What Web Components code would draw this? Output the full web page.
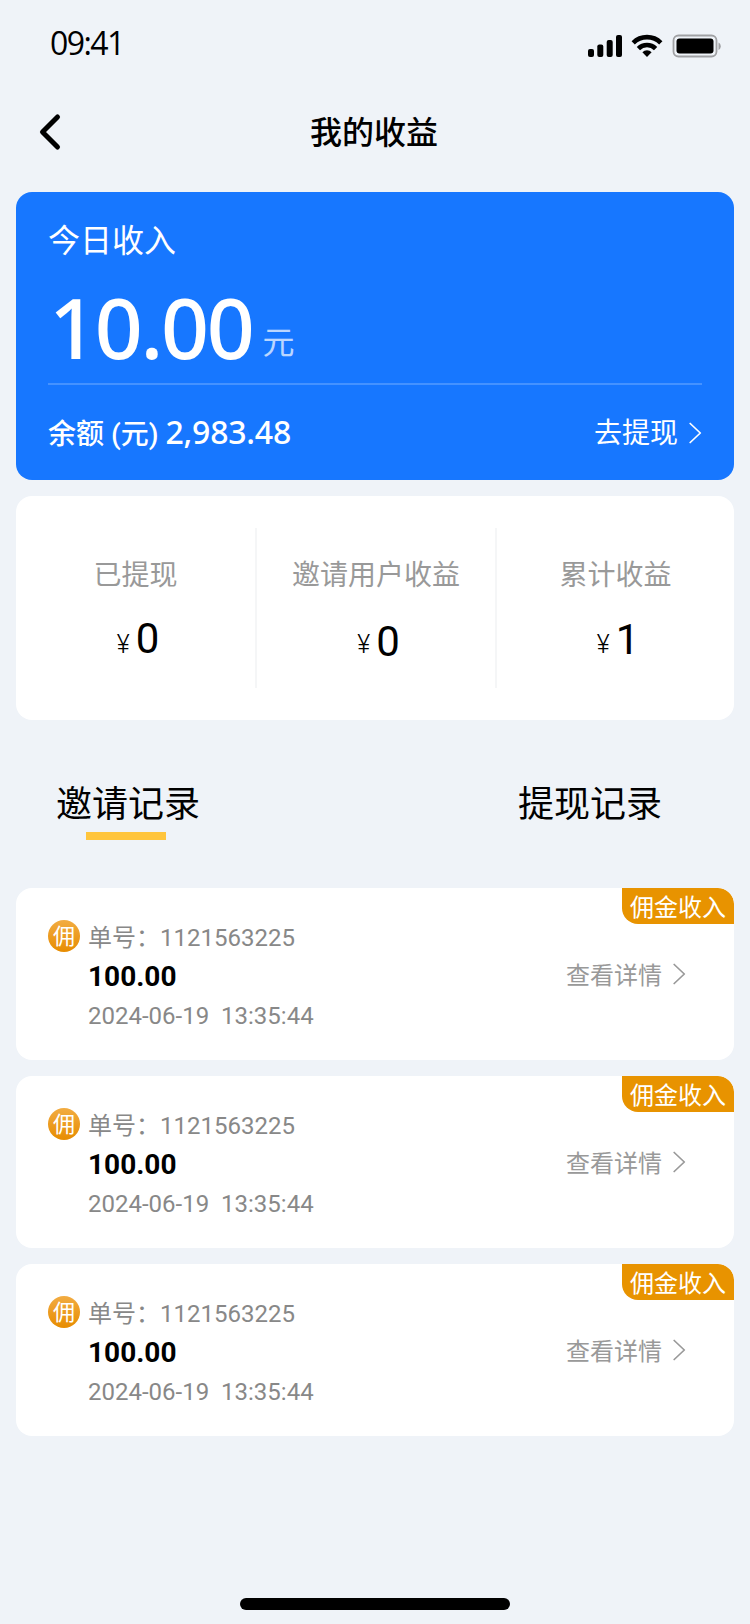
<!DOCTYPE html>
<html lang="zh-CN">
<head>
<meta charset="utf-8">
<title>我的收益</title>
<style>
html,body{margin:0;padding:0}
body{background:#eff3f8;color:#000;font-family:Roboto,"Noto Sans CJK SC",sans-serif;width:750px;height:1624px;overflow:hidden}
</style>
</head>
<body>
<earnings-page></earnings-page>
<script>
const define=(name,html)=>{
  const t=document.createElement('template');
  t.innerHTML=html;
  customElements.define(name,class extends HTMLElement{
    constructor(){
      super();
      this.attachShadow({mode:'open'}).append(t.content.cloneNode(true));
    }
  });
};

define('chevron-icon',`
<style>:host{display:block;width:13px;height:22px}svg{display:block}</style>
<svg width="13" height="22" viewBox="0 0 13 22" fill="none" stroke="currentColor" stroke-width="1.7" stroke-linecap="round" stroke-linejoin="round"><path d="M1.2 1.5 11.3 11 1.2 20.5"/></svg>`);

define('status-bar',`
<style>
:host{display:flex;height:88px;box-sizing:border-box;padding:0 29px 0 50px;justify-content:space-between}
.time{font:400 32px/40px "Open Sans","Noto Sans",sans-serif;letter-spacing:-1.6px;margin-top:23px}
svg{display:block;margin-top:32px}
</style>
<span class="time">09:41</span>
<svg width="136" height="28" viewBox="0 0 136 28">
  <rect x="3" y="17" width="6" height="8" rx="2"/><rect x="12.300" y="12.500" width="6" height="12.500" rx="2"/><rect x="21.700" y="8" width="6" height="17" rx="2"/><rect x="31" y="3" width="6" height="22" rx="2"/>
  <g fill="none" stroke="#000" stroke-width="4.600"><path d="M48.200 10.800a19.500 19.500 0 0 1 27.600 0"/><path d="M53.400 16.600a12.200 12.200 0 0 1 17.200 0"/></g>
  <path d="M57.400 20.200a6.500 6.500 0 0 1 9.200 0L62 25z"/>
  <rect x="88.500" y="3.500" width="43" height="21" rx="5" fill="none" stroke="#a0a1a4" stroke-width="1.800"/>
  <rect x="91.500" y="6.500" width="37" height="15" rx="3"/>
  <path d="M133.500 10.500c3 1.500 3 6 0 7.500z" fill="#a0a1a4"/>
</svg>`);

define('nav-bar',`
<style>
:host{display:grid;grid-template-columns:1fr auto 1fr;height:88px;align-items:center}
svg{display:block;margin-left:38px}
h1{margin:2px 2px 0 0;font-size:32px;line-height:48px;font-weight:500}
</style>
<svg width="24" height="38" viewBox="0 0 24 38" fill="none" stroke="#000" stroke-width="5" stroke-linecap="round" stroke-linejoin="round"><path d="M19.500 4 4.500 19l15 15"/></svg>
<h1><slot></slot></h1>`);

define('balance-card',`
<style>
:host{display:flex;flex-direction:column;box-sizing:border-box;height:288px;margin:16px 16px 0;padding:0 32px;border-radius:16px;background:#1777ff;color:#fff}
.label{font-size:32px;line-height:48px;margin-top:25px}
.sum{display:flex;align-items:baseline;height:120px;box-sizing:border-box;line-height:100px;padding-top:12px;border-bottom:2px solid #4592ff}
.big{font-family:"Noto Sans",sans-serif;font-size:84px;font-weight:500;letter-spacing:-2.3px;margin-left:1px}
.unit{font-size:32px;opacity:.7;margin-left:10px;position:relative;top:-5px}
.foot{display:flex;justify-content:space-between;align-items:center;line-height:40px;margin-top:25px;font-size:28px}
.bal{font-weight:500;margin-top:2px}.bal b{font-family:"Noto Sans",sans-serif;font-weight:500;font-size:32px;letter-spacing:-.2px}
.go{display:flex;align-items:center;gap:11px}
.go span{margin-top:3px}
</style>
<div class="label">今日收入</div>
<div class="sum"><span class="big">10.00</span><span class="unit">元</span></div>
<div class="foot"><span class="bal">余额 (元) <b>2,983.48</b></span><span class="go"><span>去提现</span><chevron-icon></chevron-icon></span></div>`);

define('stat-item',`
<style>
:host{display:flex;flex-direction:column;align-items:center;flex:1}
.label{font-size:28px;line-height:40px;color:#999;margin-top:28px}
.value{display:flex;align-items:baseline;gap:6px;margin:13px 0 0 5px;line-height:60px;font-size:25px}
.value span{font-weight:300}
.value b{font-weight:400;font-size:42px;position:relative;top:var(--digit-shift,0px)}
</style>
<div class="label"><slot></slot></div>
<div class="value"><span>¥</span><b><slot name="value"></slot></b></div>`);

define('stats-card',`
<style>
:host{display:flex;box-sizing:border-box;height:224px;margin:16px 16px 0;padding:32px 0;border-radius:16px;background:#fff}
i{width:2px;background:#f5f6f7}
stat-item{flex:0 0 auto}
stat-item:nth-of-type(1){width:239px}
stat-item:nth-of-type(2){width:238px;--digit-shift:3px}
stat-item:nth-of-type(3){width:237px;--digit-shift:1px}
</style>
<stat-item>已提现<span slot="value">0</span></stat-item><i></i>
<stat-item>邀请用户收益<span slot="value">0</span></stat-item><i></i>
<stat-item>累计收益<span slot="value">1</span></stat-item>`);

define('record-tabs',`
<style>
:host{display:flex;justify-content:space-between;height:168px;box-sizing:border-box;padding:59px 88px 0 56px}
div{font-size:36px;line-height:52px}
.on::after{content:"";display:block;width:80px;height:8px;margin:1px 0 0 30px;background:#ffc53d}
</style>
<div class="on">邀请记录</div><div>提现记录</div>`);

define('record-card',`
<style>
:host{display:grid;grid-template-columns:32px 1fr auto;column-gap:8px;position:relative;box-sizing:border-box;height:172px;margin:0 16px 16px;padding:32px 48px 0 32px;border-radius:16px;background:#fff;overflow:hidden}
.ico{width:32px;height:32px;border-radius:50%;background:linear-gradient(#f2ac42,#e78c00);color:#fff;font-size:22px;line-height:33px;text-align:center}
.no,.time{font-size:24px;line-height:36px;color:#888;white-space:pre}
.amt{font-size:28px;line-height:42px;font-weight:700}
.more{display:flex;align-items:center;gap:11px;height:40px;margin-top:34px;font-size:24px;color:#999}
.more span{margin-top:-2px}
.tag{position:absolute;right:0;top:0;width:112px;height:36px;border-radius:0 16px 0 16px;background:#e89300;color:#fff;font-size:24px;line-height:41px;text-align:center}
</style>
<div class="ico">佣</div>
<div><div class="no">单号：<slot></slot></div><div class="amt">100.00</div><div class="time">2024-06-19  13:35:44</div></div>
<div class="more"><span>查看详情</span><chevron-icon></chevron-icon></div>
<div class="tag">佣金收入</div>`);

define('home-indicator',`
<style>:host{display:block;width:270px;height:12px;border-radius:6px;background:#000;margin:auto auto 14px}</style>`);

define('earnings-page',`
<style>:host{display:flex;flex-direction:column;width:750px;height:1624px}</style>
<status-bar></status-bar>
<nav-bar>我的收益</nav-bar>
<balance-card></balance-card>
<stats-card></stats-card>
<record-tabs></record-tabs>
<record-card>1121563225</record-card>
<record-card>1121563225</record-card>
<record-card>1121563225</record-card>
<home-indicator></home-indicator>`);
</script>
</body>
</html>
